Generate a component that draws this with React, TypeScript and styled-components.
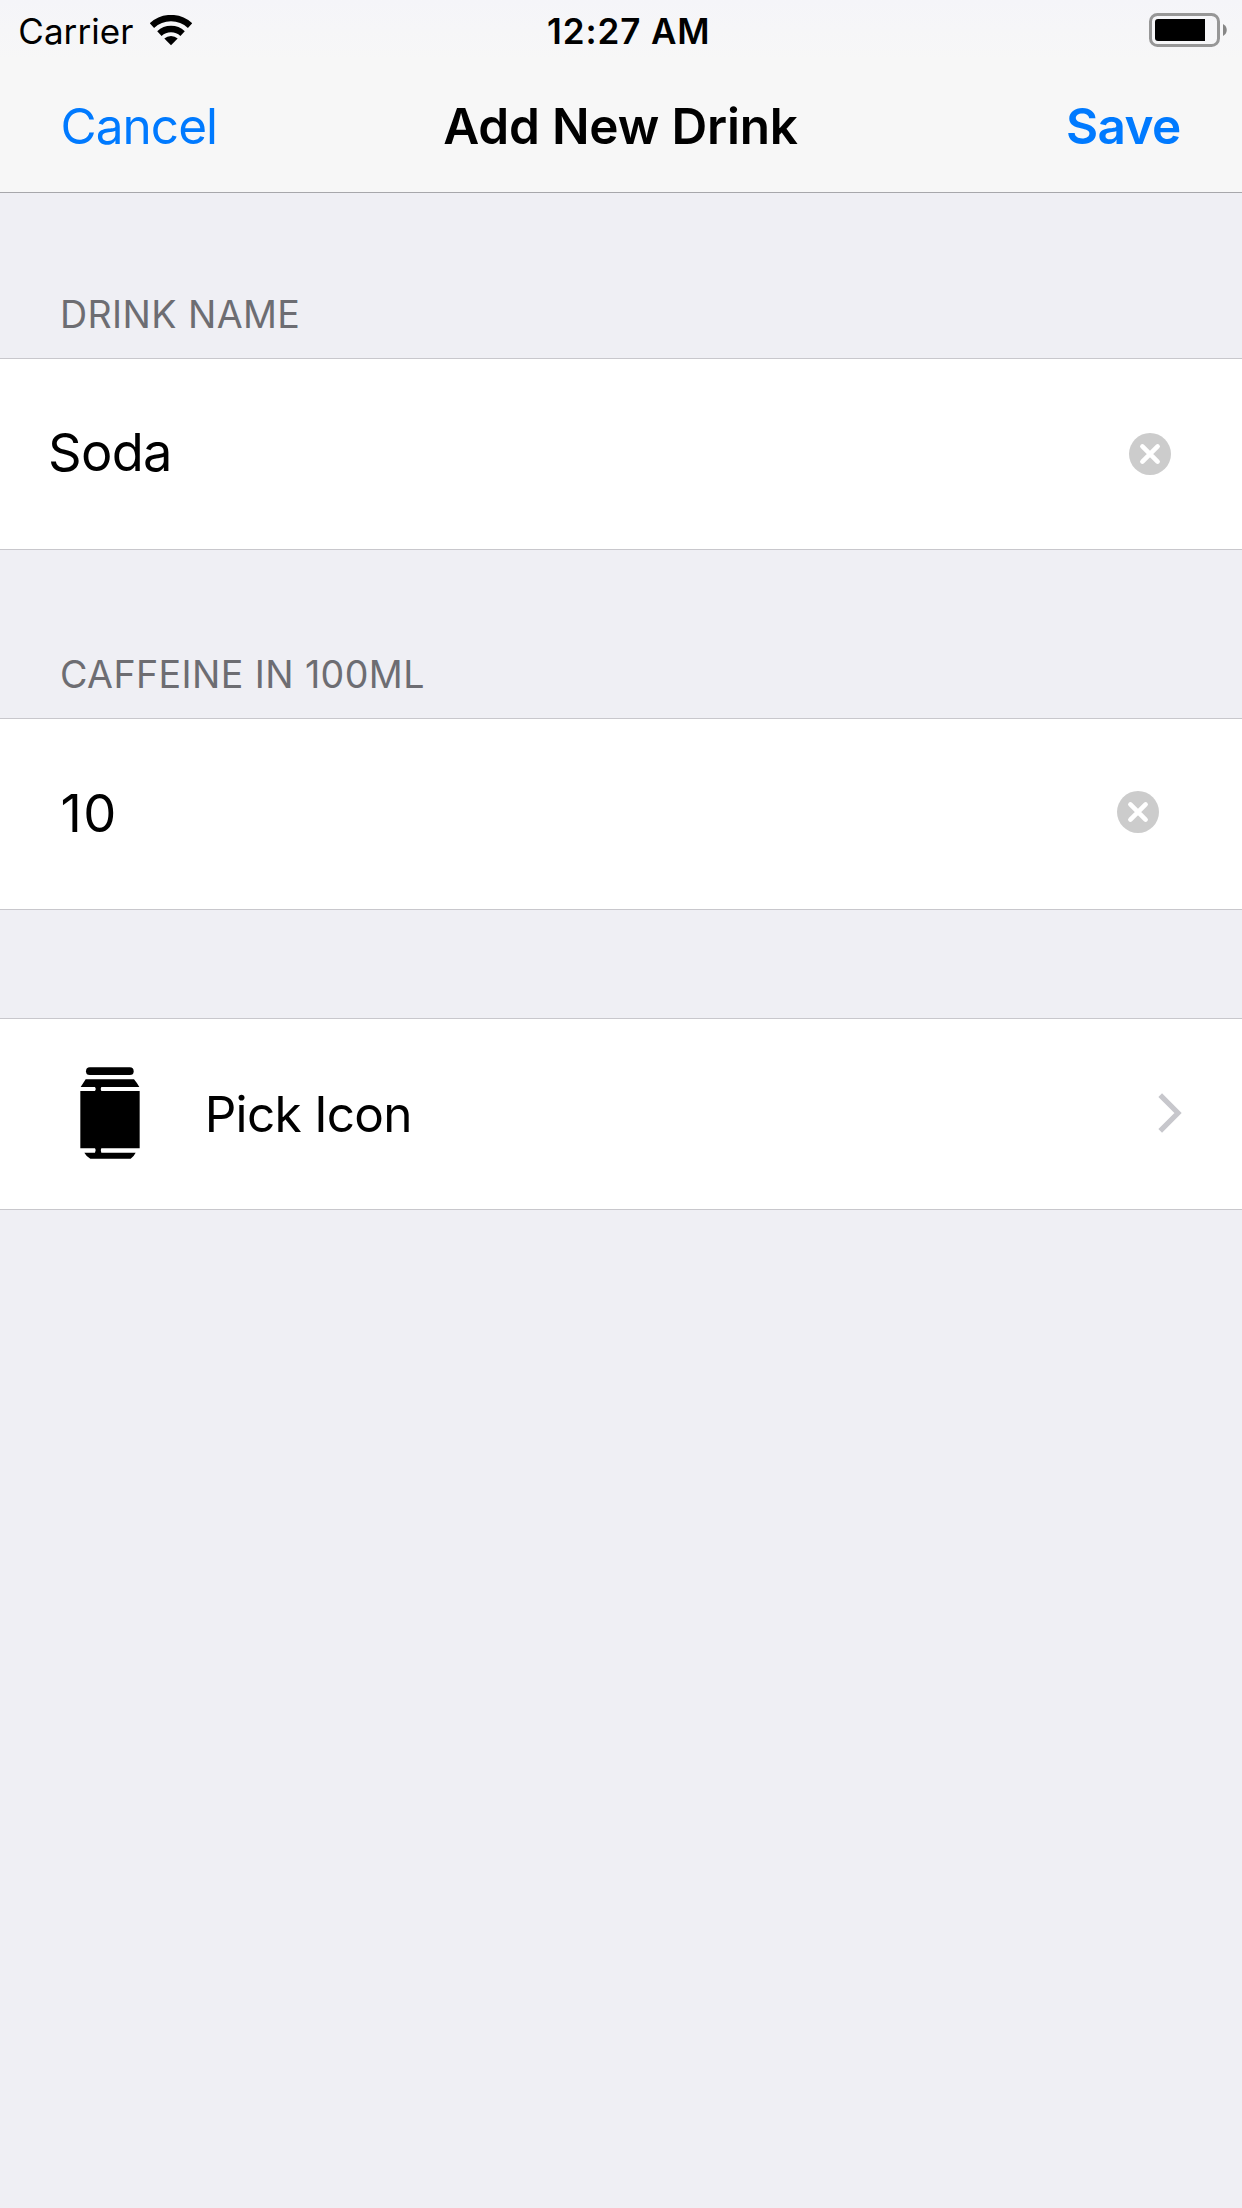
import React from "react";
import styled, { createGlobalStyle } from "styled-components";

const GlobalStyle = createGlobalStyle`
  * { box-sizing: border-box; }
  body {
    margin: 0;
    background: #efeff4;
    color: #000;
    font-family: Inter, "Liberation Sans", sans-serif;
  }
`;

const Screen = styled.div`
  display: flex;
  flex-direction: column;
  width: 1242px;
  min-height: 2208px;
  background: #efeff4;
`;

const TopBar = styled.header`
  height: 193px;
  background: linear-gradient(#f5f5f9, #f7f7f7 60px);
  border-bottom: 1px solid #a7a7ab;
`;

const StatusBar = styled.div`
  display: grid;
  grid-template-columns: 547px auto 1fr;
  align-items: center;
  height: 60px;
  padding: 0 15px 0 0;
`;

const CarrierGroup = styled.div`
  display: flex;
  align-items: center;
  gap: 17px;
  padding-left: 18.3px;
`;

const StatusText = styled.span<{ $bold?: boolean }>`
  font-size: 35px;
  line-height: 42px;
  padding-top: 1px;
  font-weight: ${(p) => (p.$bold ? 560 : 400)};
  letter-spacing: ${(p) => (p.$bold ? "0.9px" : "0.05px")};
  white-space: nowrap;
`;

const BatteryIcon = styled.svg`
  display: block;
  justify-self: end;
`;

const NavBar = styled.nav`
  display: grid;
  grid-template-columns: 1fr auto 1fr;
  align-items: center;
  height: 132px;
  padding: 0 61.5px 0 60.5px;
`;

const NavButton = styled.button<{ $primary?: boolean }>`
  justify-self: ${(p) => (p.$primary ? "end" : "start")};
  padding: 0;
  border: 0;
  background: none;
  color: #007aff;
  font-family: inherit;
  font-size: 49.5px;
  line-height: 60px;
  font-weight: ${(p) => (p.$primary ? 600 : 400)};
  letter-spacing: ${(p) => (p.$primary ? "-0.7px" : "-0.95px")};
`;

const Title = styled.h1`
  margin: 0;
  font-size: 49.5px;
  line-height: 60px;
  font-weight: 600;
  letter-spacing: -0.17px;
`;

const Section = styled.section<{ $gap: number }>`
  display: flex;
  flex-direction: column;
  padding-top: ${(p) => p.$gap}px;
`;

const SectionLabel = styled.h2<{ $tracking: number }>`
  margin: 0;
  padding: 0 60px 20px;
  color: #6d6d72;
  font-size: 37.6px;
  line-height: 46px;
  font-weight: 400;
  letter-spacing: ${(p) => p.$tracking}px;
`;

const Row = styled.div<{ $left: number; $right: number }>`
  display: flex;
  align-items: center;
  justify-content: space-between;
  height: 192px;
  padding: 0 ${(p) => p.$right}px 0 ${(p) => p.$left}px;
  background: #fff;
  border: solid #c8c7cc;
  border-width: 1px 0;
`;

const FieldValue = styled.span<{ $tracking: number; $lift: number }>`
  padding-bottom: ${(p) => p.$lift}px;
  font-size: 52.4px;
  line-height: 64px;
  letter-spacing: ${(p) => p.$tracking}px;
`;

const ClearButton = styled.button<{ $lift?: number }>`
  display: flex;
  padding: 0 0 ${(p) => p.$lift ?? 0}px;
  border: 0;
  background: none;
`;

const PickGroup = styled.div`
  display: flex;
  align-items: center;
  gap: 65.2px;
`;

const CanIcon = styled.svg`
  display: block;
  margin-bottom: 3px;
`;

const Chevron = styled.svg`
  display: block;
  margin-bottom: 3px;
`;

const PickLabel = styled.span`
  font-size: 49.5px;
  line-height: 60px;
  letter-spacing: -0.7px;
`;

const Wifi = () => (
  <svg width="42" height="31" viewBox="150 15 42 31">
    <g fill="none" stroke="#000" strokeWidth="6.4">
      <path d="M151.9 25.6A28 28 0 0 1 190.1 25.6" />
      <path d="M159.4 33.6A17 17 0 0 1 182.6 33.6" />
    </g>
    <path d="M164.3 38.6A9.6 9.6 0 0 1 177.7 38.6L171 45.3Z" />
  </svg>
);

const Battery = () => (
  <BatteryIcon width="78" height="34" viewBox="0 0 78 34">
    <rect x="1.5" y="1.5" width="68" height="31" rx="7" fill="none" stroke="#979797" strokeWidth="3" />
    <path d="M9 6H56V28H9A3 3 0 0 1 6 25V9A3 3 0 0 1 9 6Z" />
    <path d="M74 11C79 13.5 79 20.5 74 23Z" fill="#868686" />
  </BatteryIcon>
);

const ClearIcon = () => (
  <svg width="42" height="42" viewBox="0 0 42 42">
    <circle cx="21" cy="21" r="21" fill="#ccc" />
    <path d="M13.4 13.4L28.6 28.6M28.6 13.4L13.4 28.6" stroke="#fff" strokeWidth="4.6" strokeLinecap="round" />
  </svg>
);

const SodaCan = () => (
  <CanIcon width="60" height="92" viewBox="119 170 180 276">
    <rect x="137" y="171" width="143" height="23" rx="11.5" />
    <path d="M136 207H281Q288 215 297 230H183Q179 236 183 242H298V414H183Q179 420 183 427H286Q280 439 271 445H150Q139 440 132 427H164Q169 420 164 414H120V242H164Q169 236 164 230H121Z" />
  </CanIcon>
);

export default function App() {
  return (
    <>
      <GlobalStyle />
      <Screen>
        <TopBar>
          <StatusBar>
            <CarrierGroup>
              <StatusText>Carrier</StatusText>
              <Wifi />
            </CarrierGroup>
            <StatusText $bold>12:27 AM</StatusText>
            <Battery />
          </StatusBar>
          <NavBar>
            <NavButton>Cancel</NavButton>
            <Title>Add New Drink</Title>
            <NavButton $primary>Save</NavButton>
          </NavBar>
        </TopBar>

        <Section $gap={99}>
          <SectionLabel $tracking={0.4}>DRINK NAME</SectionLabel>
          <Row $left={48} $right={71}>
            <FieldValue $tracking={-0.7} $lift={4}>Soda</FieldValue>
            <ClearButton aria-label="Clear drink name">
              <ClearIcon />
            </ClearButton>
          </Row>
        </Section>

        <Section $gap={102}>
          <SectionLabel $tracking={0.4}>CAFFEINE IN 100ML</SectionLabel>
          <Row $left={60.5} $right={83}>
            <FieldValue $tracking={1.5} $lift={2}>10</FieldValue>
            <ClearButton $lift={4} aria-label="Clear caffeine amount">
              <ClearIcon />
            </ClearButton>
          </Row>
        </Section>

        <Section $gap={108}>
          <Row $left={79.5} $right={59}>
            <PickGroup>
              <SodaCan />
              <PickLabel>Pick Icon</PickLabel>
            </PickGroup>
            <Chevron width="25" height="40" viewBox="0 0 25 40">
              <path d="M2.2 2.2L20 20L2.2 37.8" fill="none" stroke="#c7c7cc" strokeWidth="5.2" />
            </Chevron>
          </Row>
        </Section>
      </Screen>
    </>
  );
}
